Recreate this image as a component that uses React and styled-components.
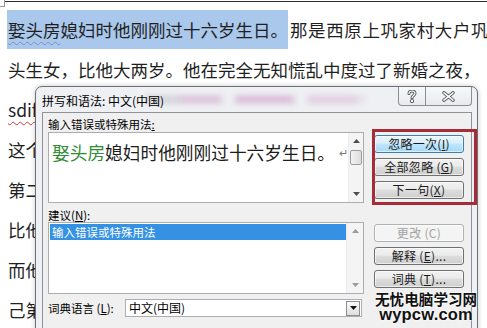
import React from 'react';
import styled, { createGlobalStyle } from 'styled-components';

const GlobalStyle = createGlobalStyle`
  html, body { margin: 0; padding: 0; background: #fff; }
  body { width: 487px; height: 328px; overflow: hidden; }
`;

const Page = styled.div`
  position: relative;
  width: 487px;
  height: 328px;
  overflow: hidden;
  background: #fff;
  font-family: "Noto Sans CJK SC", "Noto Sans", sans-serif;
`;

const TopBar = styled.div`
  display: flex;
  height: 8px;
`;

const CornerMark = styled.div`
  width: 4px;
  height: 6px;
  border-right: 1px solid #9a9a9a;
  border-bottom: 1px solid #9a9a9a;
`;

const Rule = styled.div`
  flex: 1;
  height: 1px;
  margin-top: 1px;
  background: #2b2b2b;
`;

const Doc = styled.div`
  padding: 2px 0 0 8px;
  font-size: 17.5px;
  line-height: 40px;
  color: #1f1f1f;
  white-space: nowrap;
`;

const Line = styled.div`
  height: 40px;
`;

const Sel = styled.span`
  display: inline-block;
  vertical-align: top;
  line-height: 39px;
  height: 39px;
  margin-left: -1px;
  padding-left: 1px;
  background: #a9c8ec;
`;

const Rest = styled.span`
  letter-spacing: 0.6px;
  margin-left: 2px;
`;

const Wavy = styled.span`
  text-decoration: underline wavy ${(p) => p.$c};
  text-decoration-thickness: 1px;
  text-underline-offset: 4px;
`;

const Dialog = styled.div`
  position: absolute;
  left: 35px;
  top: 86px;
  width: 443px;
  height: 262px;
  box-sizing: border-box;
  border: 1px solid #6c7077;
  border-radius: 7px 7px 0 0;
  background: #eef0f3;
  box-shadow: 0 0 5px rgba(0, 0, 0, 0.22);
  display: flex;
  flex-direction: column;
  font-size: 12px;
  color: #000;
`;

const TitleBar = styled.div`
  position: relative;
  height: 25px;
  display: flex;
  align-items: flex-start;
  padding: 0 5px 0 6px;
`;

const Glass = styled.div`
  position: absolute;
  left: 110px;
  right: 90px;
  top: 8px;
  height: 9px;
  filter: blur(2.5px);
  background: linear-gradient(
    90deg,
    rgba(150, 140, 160, 0.25) 0 12%,
    rgba(205, 150, 200, 0.45) 16% 30%,
    transparent 33% 36%,
    rgba(200, 140, 195, 0.45) 38% 60%,
    transparent 63% 66%,
    rgba(210, 165, 205, 0.4) 68% 86%,
    transparent 92%
  );
`;

const Title = styled.div`
  position: relative;
  margin-top: 7px;
  line-height: 14px;
  font-size: 12px;
`;

const Caption = styled.div`
  position: relative;
  margin-left: auto;
  display: flex;
  height: 18px;
  border: 1px solid #8b8f95;
  border-top: none;
  border-radius: 0 0 4px 4px;
  background: linear-gradient(#f7f8fa, #e8eaee);
`;

const CapBtn = styled.div`
  width: ${(p) => p.$w}px;
  display: flex;
  align-items: center;
  justify-content: center;
  & + & { border-left: 1px solid #8b8f95; }
`;

const Client = styled.div`
  flex: 1;
  margin: 0 5px 0 6px;
  border: 1px solid #8f9398;
  border-bottom: none;
  background: #f0f0f0;
  display: grid;
  grid-template-columns: 316px 90px;
  column-gap: 10px;
  align-items: start;
  padding: 4px 0 0 5px;
`;

const LeftCol = styled.div`
  display: flex;
  flex-direction: column;
`;

const Label = styled.div`
  height: 14px;
  line-height: 14px;
  font-size: 11.5px;
  margin-top: ${(p) => p.$mt || 0}px;
  white-space: nowrap;
`;

const Box = styled.div`
  display: flex;
  height: ${(p) => p.$h}px;
  margin-top: ${(p) => p.$mt || 0}px;
  border: 1px solid #abadb3;
  background: #fff;
  box-sizing: border-box;
`;

const Sentence = styled.div`
  flex: 1;
  padding: 8px 0 0 3px;
  font-size: 17.7px;
  line-height: 22px;
  color: #1c1c1c;
  white-space: nowrap;
`;

const Green = styled.span`
  color: #2f8d36;
`;

const ParaMark = styled.span`
  font-size: 11px;
  color: #7a7a7a;
  margin-left: 4px;
  vertical-align: 3px;
`;

const ScrollBar = styled.div`
  width: 16px;
  display: flex;
  flex-direction: column;
  background: #f4f4f4;
  border-left: 1px solid #ececec;
`;

const Arrow = styled.div`
  height: 16px;
  display: flex;
  align-items: center;
  justify-content: center;
  margin-top: ${(p) => (p.$down ? 'auto' : '0')};
`;

const Thumb = styled.div`
  height: 13px;
  margin: 1px 1px 0;
  border: 1px solid #9c9c9c;
  border-radius: 2px;
  background: linear-gradient(90deg, #f2f2f2, #dcdcdc);
`;

const Items = styled.div`
  flex: 1;
  padding: 1px 0 0 1px;
`;

const Item = styled.div`
  height: 16px;
  line-height: 16px;
  padding-left: 2px;
  font-size: 11.5px;
  color: #fff;
  background: #3591e3;
`;

const LangRow = styled.div`
  display: flex;
  align-items: center;
  margin-top: 5px;
  height: 18px;
`;

const LangLabel = styled(Label)`
  width: 77px;
`;

const Select = styled.div`
  flex: 1;
  height: 18px;
  margin-right: 2px;
  box-sizing: border-box;
  border: 1px solid #abadb3;
  background: #fff;
  display: flex;
  align-items: center;
`;

const SelText = styled.div`
  flex: 1;
  padding-left: 3px;
  font-size: 12px;
  line-height: 16px;
`;

const DropBtn = styled.div`
  width: 12px;
  height: 13px;
  margin-right: 1px;
  border: 1px solid #8e8e8e;
  background: linear-gradient(#fafafa, #dedede);
  display: flex;
  align-items: center;
  justify-content: center;
`;

const RightCol = styled.div`
  display: flex;
  flex-direction: column;
  gap: 5px;
  padding-top: 18px;
`;

const Button = styled.div`
  height: 18px;
  box-sizing: border-box;
  border: 1px solid ${(p) => (p.$focus ? '#3c7fb1' : p.$disabled ? '#adb2b5' : '#707070')};
  border-radius: 3px;
  margin-top: ${(p) => p.$mt || 0}px;
  display: flex;
  align-items: center;
  justify-content: center;
  font-size: 12px;
  letter-spacing: 0.3px;
  line-height: 16px;
  white-space: pre;
  color: ${(p) => (p.$disabled ? '#a3a3a3' : '#1a1a1a')};
  background: ${(p) =>
    p.$focus
      ? 'linear-gradient(#eaf6fd 0%, #d9f0fc 45%, #bee6fd 50%, #a7d9f5 100%)'
      : p.$disabled
      ? '#f4f4f4'
      : 'linear-gradient(#f2f2f2 0%, #ebebeb 45%, #dddddd 50%, #cfcfcf 100%)'};
  box-shadow: inset 0 0 0 1px rgba(255, 255, 255, 0.6);
`;

const Callout = styled.div`
  position: absolute;
  left: 372px;
  top: 129px;
  width: 105px;
  height: 76px;
  box-sizing: border-box;
  border: 3px solid #a82c38;
`;

const Watermark = styled.div`
  position: absolute;
  left: 375px;
  top: 291px;
  display: flex;
  flex-direction: column;
  align-items: center;
  color: #111;
  text-shadow: 0 0 2px #fff, 0 0 2px #fff;
`;

const WmCn = styled.div`
  font-family: "Noto Sans CJK SC", sans-serif;
  font-weight: 700;
  font-size: 14.6px;
  line-height: 16px;
  white-space: nowrap;
`;

const WmEn = styled.div`
  font-family: "Liberation Sans", Arial, sans-serif;
  font-weight: 700;
  font-size: 16.5px;
  line-height: 15px;
  letter-spacing: 0.2px;
`;

const Up = ({ c = '#4d4d4d' }) => (
  <svg width="7" height="4" viewBox="0 0 7 4"><path d="M0 4 L3.5 0 L7 4 Z" fill={c} /></svg>
);
const Down = ({ c = '#4d4d4d' }) => (
  <svg width="7" height="4" viewBox="0 0 7 4"><path d="M0 0 L3.5 4 L7 0 Z" fill={c} /></svg>
);

const HelpIcon = () => (
  <svg width="10" height="13" viewBox="0 0 10 13">
    <g fill="none" strokeLinecap="round" strokeLinejoin="round">
      <path d="M2 3.6 C2 1.6 3.4 1 5 1 C6.8 1 8 2 8 3.6 C8 5.4 5 5.6 5 7.8" stroke="#50545a" strokeWidth="3" />
      <circle cx="5" cy="11" r="0.6" stroke="#50545a" strokeWidth="3" />
      <path d="M2 3.6 C2 1.6 3.4 1 5 1 C6.8 1 8 2 8 3.6 C8 5.4 5 5.6 5 7.8" stroke="#fff" strokeWidth="1.2" />
      <circle cx="5" cy="11" r="0.6" stroke="#fff" strokeWidth="1.1" />
    </g>
  </svg>
);

const CloseIcon = () => (
  <svg width="13" height="11" viewBox="0 0 13 11">
    <g strokeLinecap="round">
      <path d="M2 1.8 L11 9.2 M11 1.8 L2 9.2" stroke="#50545a" strokeWidth="3.4" />
      <path d="M2 1.8 L11 9.2 M11 1.8 L2 9.2" stroke="#fff" strokeWidth="1.5" />
    </g>
  </svg>
);

export default function App() {
  return (
    <Page>
      <GlobalStyle />
      <TopBar>
        <CornerMark />
        <Rule />
      </TopBar>
      <Doc>
        <Line>
          <Sel>
            <Wavy $c="#7d8fc2">娶头房</Wavy>媳妇时他刚刚过十六岁生日。
          </Sel>
          <Rest>那是西原上巩家村大户巩增荣的</Rest>
        </Line>
        <Line>头生女，比他大两岁。他在完全无知慌乱中度过了新婚之夜，</Line>
        <Line>
          <Wavy $c="#d23a3a">sdif</Wavy>留下了永远羞于启齿的傻样，而自己却永远忘不掉一
        </Line>
        <Line>这个女人死于难产。第二个女人是南原庞家村殷实人家</Line>
        <Line>第二个女人是南原庞家村殷实人家庞修瑞的奶干女儿。上</Line>
        <Line>比他大一岁，这个女人进门后的头一年还是什么事也没有么</Line>
        <Line>而他已经体会到了男人的好处，只是这个女人后来变得瓦</Line>
        <Line>己第三个女人是北原樊家寨樊家的二姑娘，娶来的时候匚</Line>
      </Doc>

      <Dialog>
        <TitleBar>
          <Glass />
          <Title>拼写和语法: 中文(中国)</Title>
          <Caption>
            <CapBtn $w={26}><HelpIcon /></CapBtn>
            <CapBtn $w={45}><CloseIcon /></CapBtn>
          </Caption>
        </TitleBar>
        <Client>
          <LeftCol>
            <Label>输入错误或特殊用法<u>:</u></Label>
            <Box $h={71} $mt={1}>
              <Sentence>
                <Green>娶头房</Green>媳妇时他刚刚过十六岁生日。<ParaMark>↵</ParaMark>
              </Sentence>
              <ScrollBar>
                <Arrow><Up /></Arrow>
                <Thumb />
                <Arrow $down><Down /></Arrow>
              </ScrollBar>
            </Box>
            <Label $mt={5}>建议(<u>N</u>):</Label>
            <Box $h={72}>
              <Items>
                <Item>输入错误或特殊用法</Item>
              </Items>
              <ScrollBar>
                <Arrow><Up c="#9a9a9a" /></Arrow>
                <Arrow $down><Down c="#9a9a9a" /></Arrow>
              </ScrollBar>
            </Box>
            <LangRow>
              <LangLabel>词典语言 (<u>L</u>):</LangLabel>
              <Select>
                <SelText>中文(中国)</SelText>
                <DropBtn><Down c="#111" /></DropBtn>
              </Select>
            </LangRow>
          </LeftCol>
          <RightCol>
            <Button $focus>忽略一次(<u>I</u>)</Button>
            <Button>全部忽略 (<u>G</u>)</Button>
            <Button>下一句(<u>X</u>)</Button>
            <Button $disabled $mt={20}>更改 (C)</Button>
            <Button>解释 (<u>E</u>)...</Button>
            <Button>词典 (<u>T</u>)...</Button>
          </RightCol>
        </Client>
      </Dialog>

      <Callout />
      <Watermark>
        <WmCn>无忧电脑学习网</WmCn>
        <WmEn>wypcw.com</WmEn>
      </Watermark>
    </Page>
  );
}
